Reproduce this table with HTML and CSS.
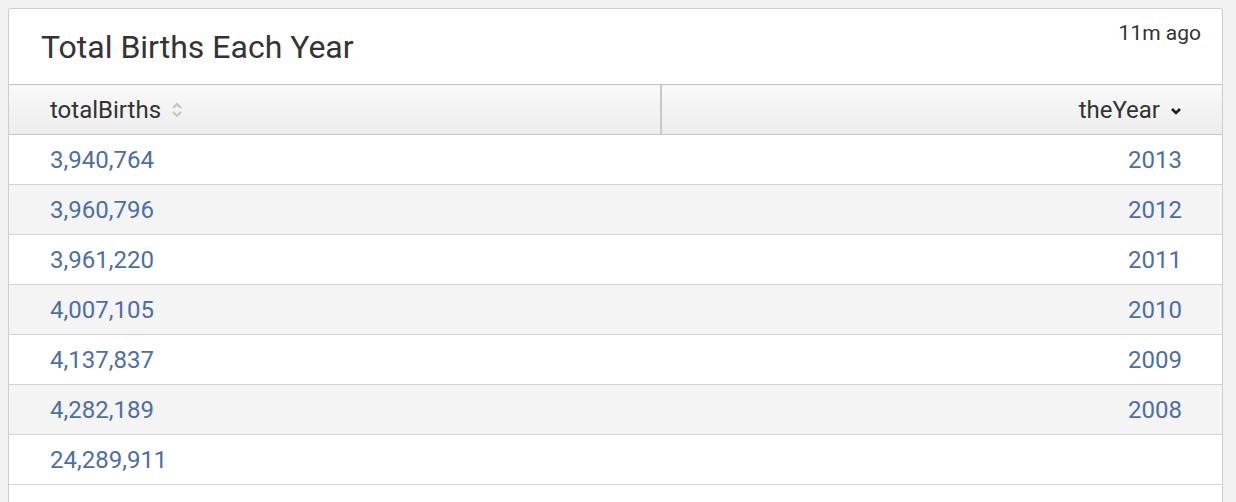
FILE: index.html
```html
<!DOCTYPE html>
<html>
<head>
<meta charset="utf-8">
<link rel="stylesheet" href="styles.css">
</head>
<body>
<div class="panel">
  <div class="panel-head">
    <h2 class="title">Total Births Each Year</h2>
    <span class="ago">11m ago</span>
  </div>
  <table class="grid">
    <thead>
      <tr>
        <th class="col-left"><span class="th-inner">totalBirths
          <svg class="sort" width="12" height="18" viewBox="0 0 12 18"><path d="M2 7 L6 3 L10 7 M2 11 L6 15 L10 11" fill="none" stroke="#c4c4c4" stroke-width="2.2"/></svg></span></th>
        <th class="col-right"><span class="th-inner">theYear
          <svg class="sort" width="12" height="18" viewBox="0 0 12 18"><path d="M2 8 L6 12 L10 8" fill="none" stroke="#1e1e1e" stroke-width="2.6"/></svg></span></th>
      </tr>
    </thead>
    <tbody>
      <tr><td class="col-left">3,940,764</td><td class="col-right">2013</td></tr>
      <tr><td class="col-left">3,960,796</td><td class="col-right">2012</td></tr>
      <tr><td class="col-left">3,961,220</td><td class="col-right">2011</td></tr>
      <tr><td class="col-left">4,007,105</td><td class="col-right">2010</td></tr>
      <tr><td class="col-left">4,137,837</td><td class="col-right">2009</td></tr>
      <tr><td class="col-left">4,282,189</td><td class="col-right">2008</td></tr>
      <tr><td class="col-left">24,289,911</td><td class="col-right"></td></tr>
    </tbody>
  </table>
</div>
</body>
</html>
```
FILE: styles.css
```css
html, body {
  margin: 0;
  padding: 0;
  background: #f2f2f2;
  font-family: Roboto, "Liberation Sans", sans-serif;
  overflow: hidden;
}
body {
  padding: 8px 0 0 8px;
}
.panel {
  width: 1213px;
  background: #fff;
  border: 1px solid #cdcdcd;
  border-bottom: none;
  border-radius: 3px 3px 0 0;
  height: 600px;
}
.panel-head {
  height: 75px;
  display: flex;
  justify-content: space-between;
  align-items: flex-start;
  padding: 0 21px 0 32px;
}
.title {
  margin: 0;
  padding-top: 18px;
  font-size: 32px;
  font-weight: 400;
  color: #333;
  line-height: 40px;
}
.ago {
  padding-top: 11px;
  font-size: 21px;
  color: #333;
  line-height: 26px;
}
.grid {
  width: 100%;
  border-collapse: collapse;
  font-size: 24px;
}
.grid th {
  height: 50px;
  padding: 0 40px 0 41px;
  font-weight: 400;
  color: #333;
  background: linear-gradient(#f9f9f9, #ececec);
  border-top: 1px solid #c6c6c6;
  border-bottom: 1px solid #c6c6c6;
  box-sizing: border-box;
}
.grid th.col-left {
  width: 652px;
  border-right: 2px solid #c8c8c8;
  text-align: left;
}
.grid th.col-right {
  text-align: right;
}
.th-inner {
  display: inline-flex;
  align-items: center;
  gap: 10px;
}
.grid td {
  height: 50px;
  padding: 0 40px 0 41px;
  color: #4c6fa4;
  border-bottom: 1px solid #d3d3d3;
  box-sizing: border-box;
}
.grid td.col-left {
  text-align: left;
}
.grid td.col-right {
  text-align: right;
}
.grid tbody tr:nth-child(even) td {
  background: #f4f4f4;
}
```
